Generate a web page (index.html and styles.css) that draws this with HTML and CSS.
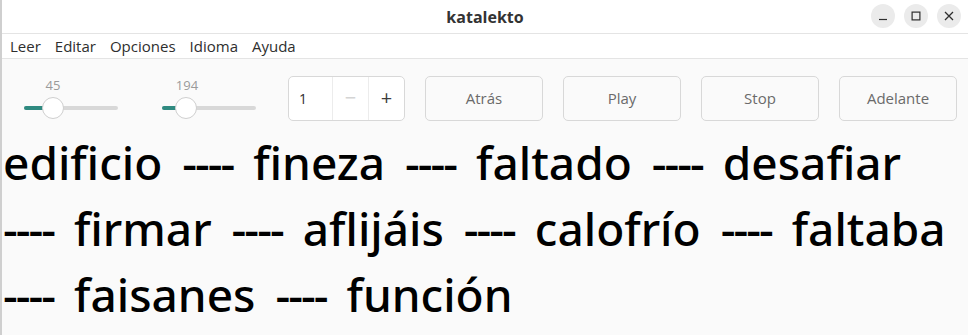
FILE: index.html
```html
<!DOCTYPE html>
<html lang="es">
<head>
  <meta charset="UTF-8">
  <title>katalekto</title>
  <link rel="stylesheet" href="styles.css">
</head>
<body>
  <div class="window">
    <div class="titlebar">
      <span class="title">katalekto</span>
      <div class="win-buttons">
        <span class="win-btn">
          <svg width="10" height="10" viewBox="0 0 10 10"><path d="M1 8.5h8" stroke="#2e2e2e" stroke-width="1.2"/></svg>
        </span>
        <span class="win-btn">
          <svg width="10" height="10" viewBox="0 0 10 10"><rect x="1.1" y="1.1" width="7.8" height="7.8" fill="none" stroke="#2e2e2e" stroke-width="1.2"/></svg>
        </span>
        <span class="win-btn">
          <svg width="10" height="10" viewBox="0 0 10 10"><path d="M1 1L9 9M9 1L1 9" stroke="#2e2e2e" stroke-width="1.3"/></svg>
        </span>
      </div>
    </div>

    <div class="menubar">
      <span>Leer</span>
      <span>Editar</span>
      <span>Opciones</span>
      <span>Idioma</span>
      <span>Ayuda</span>
    </div>

    <div class="toolbar">
      <div class="slider">
        <div class="slider-value"><span style="left: 29px">45</span></div>
        <div class="track"><div class="fill" style="width: 29px"></div><div class="knob" style="left: 29px"></div></div>
      </div>
      <div class="slider">
        <div class="slider-value"><span style="left: 25px">194</span></div>
        <div class="track"><div class="fill" style="width: 24px"></div><div class="knob" style="left: 24px"></div></div>
      </div>
      <div class="spin">
        <span class="spin-value">1</span>
        <span class="spin-btn disabled">−</span>
        <span class="spin-btn">+</span>
      </div>
      <button class="btn">Atrás</button>
      <button class="btn">Play</button>
      <button class="btn">Stop</button>
      <button class="btn">Adelante</button>
    </div>

    <div class="words">
      edificio <span class="sep">----</span> fineza <span class="sep">----</span> faltado <span class="sep">----</span> desafiar
      <span class="sep">----</span> firmar <span class="sep">----</span> aflijáis <span class="sep">----</span> calofrío <span class="sep">----</span> faltaba
      <span class="sep">----</span> faisanes <span class="sep">----</span> función
    </div>
  </div>
</body>
</html>
```

FILE: styles.css
```css
body {
  margin: 0;
  font-family: "Open Sans", "Noto Sans", sans-serif;
  background: #fafafa;
  overflow: hidden;
}
.window {
  border-left: 2px solid #cfcfcf;
  height: 335px;
  box-sizing: border-box;
  background: #fafafa;
}
.titlebar {
  height: 33px;
  background: #ffffff;
  border-bottom: 1px solid #e4e4e4;
  display: flex;
  align-items: center;
  justify-content: center;
  position: relative;
}
.title {
  font-weight: bold;
  font-size: 16px;
  color: #333;
}
.win-buttons {
  position: absolute;
  right: 7px;
  top: 4px;
  display: flex;
  gap: 9px;
}
.win-btn {
  width: 24px;
  height: 24px;
  border-radius: 50%;
  background: #ebebeb;
  display: flex;
  align-items: center;
  justify-content: center;
}
.menubar {
  height: 24px;
  background: #ffffff;
  border-bottom: 1px solid #e4e4e4;
  display: flex;
  align-items: center;
  gap: 14px;
  padding-left: 8px;
  font-size: 15px;
  color: #2e2e2e;
}
.toolbar {
  display: flex;
  align-items: center;
  height: 78px;
  padding: 0 8px 0 22px;
  gap: 20px;
}
.slider {
  width: 94px;
  margin-right: 24px;
  align-self: flex-start;
  margin-top: 18px;
}
.slider-value {
  position: relative;
  height: 29px;
}
.slider-value span {
  position: absolute;
  top: -1px;
  transform: translateX(-50%);
  font-size: 13px;
  color: #9a9a9a;
}
.track {
  position: relative;
  width: 94px;
  height: 4px;
  border-radius: 2px;
  background: #d8d8d8;
}
.fill {
  height: 4px;
  border-radius: 2px;
  background: #2f8a80;
}
.knob {
  position: absolute;
  top: -9px;
  margin-left: -11px;
  width: 20px;
  height: 20px;
  border-radius: 50%;
  background: #ffffff;
  border: 1px solid #cfcfcf;
}
.spin {
  display: flex;
  width: 117px;
  height: 45px;
  box-sizing: border-box;
  border: 1px solid #d8d8d8;
  border-radius: 5px;
  background: #ffffff;
  margin-left: -12px;
}
.spin-value {
  flex: 1;
  padding-left: 10px;
  line-height: 43px;
  font-size: 14px;
  color: #2e2e2e;
}
.spin-btn {
  width: 35px;
  border-left: 1px solid #ececec;
  text-align: center;
  line-height: 41px;
  font-size: 20px;
  color: #3c3c3c;
}
.spin-btn.disabled {
  color: #d4d4d4;
}
.btn {
  width: 118px;
  height: 45px;
  border: 1px solid #d8d8d8;
  border-radius: 5px;
  background: #fafafa;
  font-family: "Open Sans", "Noto Sans", sans-serif;
  font-size: 15px;
  color: #6a6a6a;
  padding: 0;
}
.words {
  margin-top: -8px;
  padding: 0 4px 0 1px;
  font-family: "Noto Sans", sans-serif;
  font-size: 46px;
  font-weight: 500;
  line-height: 66px;
  color: #000;
  word-spacing: 8px;
}
.sep {
  white-space: nowrap;
  letter-spacing: -2px;
}
```
